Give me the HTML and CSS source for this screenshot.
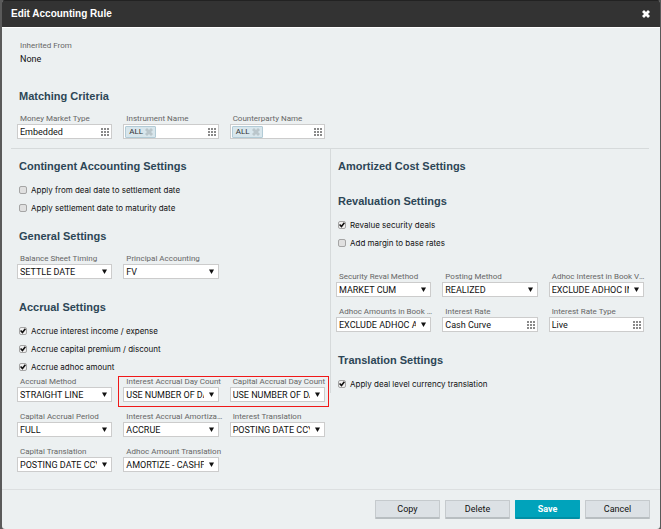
FILE: index.html
```html
<!DOCTYPE html>
<html lang="en">
<head>
<meta charset="utf-8">
<title>Edit Accounting Rule</title>
<link rel="stylesheet" href="styles.css">
</head>
<body>
<svg class="defs" aria-hidden="true">
  <symbol id="grid" viewBox="0 0 8 8"><path fill="#8a8a8a" d="M0 0h2v2H0zM3 0h2v2H3zM6 0h2v2H6zM0 3h2v2H0zM3 3h2v2H3zM6 3h2v2H6zM0 6h2v2H0zM3 6h2v2H3zM6 6h2v2H6z"/></symbol>
  <symbol id="arrow" viewBox="0 0 5 5"><path fill="#111" d="M0 .5h5L2.5 5z"/></symbol>
  <symbol id="cross" viewBox="0 0 8 8"><path fill="currentColor" d="M0 2 2 0l2 2 2-2 2 2-2 2 2 2-2 2-2-2-2 2-2-2 2-2z"/></symbol>
</svg>
<form class="dialog">
  <header class="titlebar">
    <h1>Edit Accounting Rule</h1>
    <button type="button" class="close" aria-label="Close"><svg><use href="#cross"/></svg></button>
  </header>
  <main>
    <section class="top">
      <dl class="inherited"><dt>Inherited From</dt><dd>None</dd></dl>
      <h2>Matching Criteria</h2>
      <div class="fields">
        <div class="field"><label for="mmt">Money Market Type</label><div class="control"><input id="mmt" type="text" value="Embedded"><svg class="grid"><use href="#grid"/></svg></div></div>
        <div class="field"><label for="inst">Instrument Name</label><div class="control tags"><span class="tag">ALL<button type="button" aria-label="Remove"><svg><use href="#cross"/></svg></button></span><input id="inst" type="text"><svg class="grid"><use href="#grid"/></svg></div></div>
        <div class="field"><label for="cpty">Counterparty Name</label><div class="control tags"><span class="tag">ALL<button type="button" aria-label="Remove"><svg><use href="#cross"/></svg></button></span><input id="cpty" type="text"><svg class="grid"><use href="#grid"/></svg></div></div>
      </div>
    </section>
    <div class="columns">
      <div class="column">
        <section>
          <h2>Contingent Accounting Settings</h2>
          <label class="check"><input type="checkbox">Apply from deal date to settlement date</label>
          <label class="check"><input type="checkbox">Apply settlement date to maturity date</label>
        </section>
        <section class="near">
          <h2>General Settings</h2>
          <div class="fields">
            <div class="field"><label for="bst">Balance Sheet Timing</label><div class="control"><select id="bst"><option>SETTLE DATE</option></select><svg class="arrow"><use href="#arrow"/></svg></div></div>
            <div class="field"><label for="pa">Principal Accounting</label><div class="control"><select id="pa"><option>FV</option></select><svg class="arrow"><use href="#arrow"/></svg></div></div>
          </div>
        </section>
        <section>
          <h2>Accrual Settings</h2>
          <label class="check"><input type="checkbox" checked>Accrue interest income / expense</label>
          <label class="check"><input type="checkbox" checked>Accrue capital premium / discount</label>
          <label class="check"><input type="checkbox" checked>Accrue adhoc amount</label>
          <div class="fields follow">
            <div class="field"><label for="am">Accrual Method</label><div class="control"><select id="am"><option>STRAIGHT LINE</option></select><svg class="arrow"><use href="#arrow"/></svg></div></div>
            <div class="highlight">
              <div class="field"><label for="iadc">Interest Accrual Day Count</label><div class="control"><select id="iadc"><option>USE NUMBER OF DAYS</option></select><svg class="arrow"><use href="#arrow"/></svg></div></div>
              <div class="field"><label for="cadc">Capital Accrual Day Count</label><div class="control"><select id="cadc"><option>USE NUMBER OF DAYS</option></select><svg class="arrow"><use href="#arrow"/></svg></div></div>
            </div>
            <div class="field"><label for="cap">Capital Accrual Period</label><div class="control"><select id="cap"><option>FULL</option></select><svg class="arrow"><use href="#arrow"/></svg></div></div>
            <div class="field"><label for="iaa">Interest Accrual Amortization</label><div class="control"><select id="iaa"><option>ACCRUE</option></select><svg class="arrow"><use href="#arrow"/></svg></div></div>
            <div class="field"><label for="it">Interest Translation</label><div class="control"><select id="it"><option>POSTING DATE CCY</option></select><svg class="arrow"><use href="#arrow"/></svg></div></div>
            <div class="field"><label for="ct">Capital Translation</label><div class="control"><select id="ct"><option>POSTING DATE CCY</option></select><svg class="arrow"><use href="#arrow"/></svg></div></div>
            <div class="field"><label for="aat">Adhoc Amount Translation</label><div class="control"><select id="aat"><option>AMORTIZE - CASHFLOW</option></select><svg class="arrow"><use href="#arrow"/></svg></div></div>
          </div>
        </section>
      </div>
      <div class="column right">
        <section><h2>Amortized Cost Settings</h2></section>
        <section>
          <h2>Revaluation Settings</h2>
          <label class="check"><input type="checkbox" checked>Revalue security deals</label>
          <label class="check"><input type="checkbox">Add margin to base rates</label>
          <div class="fields apart">
            <div class="field"><label for="srm">Security Reval Method</label><div class="control"><select id="srm"><option>MARKET CUM</option></select><svg class="arrow"><use href="#arrow"/></svg></div></div>
            <div class="field"><label for="pm">Posting Method</label><div class="control"><select id="pm"><option>REALIZED</option></select><svg class="arrow"><use href="#arrow"/></svg></div></div>
            <div class="field"><label for="aib">Adhoc Interest in Book Value</label><div class="control"><select id="aib"><option>EXCLUDE ADHOC INTEREST</option></select><svg class="arrow"><use href="#arrow"/></svg></div></div>
            <div class="field"><label for="aab">Adhoc Amounts in Book Value</label><div class="control"><select id="aab"><option>EXCLUDE ADHOC AMOUNTS</option></select><svg class="arrow"><use href="#arrow"/></svg></div></div>
            <div class="field"><label for="ir">Interest Rate</label><div class="control"><input id="ir" type="text" value="Cash Curve"><svg class="grid"><use href="#grid"/></svg></div></div>
            <div class="field"><label for="irt">Interest Rate Type</label><div class="control"><input id="irt" type="text" value="Live"><svg class="grid"><use href="#grid"/></svg></div></div>
          </div>
        </section>
        <section>
          <h2>Translation Settings</h2>
          <label class="check"><input type="checkbox" checked>Apply deal level currency translation</label>
        </section>
      </div>
    </div>
  </main>
  <footer>
    <button type="button">Copy</button>
    <button type="button">Delete</button>
    <button type="button" class="primary">Save</button>
    <button type="button">Cancel</button>
  </footer>
</form>
</body>
</html>
```
FILE: styles.css
```css
* { box-sizing: border-box; }
html { background: #5a5a5a; }
body { margin: 0; padding: 0 1px 0 2px; font: 9px/12px Roboto, "Liberation Sans", Arial, sans-serif; color: #111; }
.defs { position: absolute; width: 0; height: 0; }
h1, h2, dl, dd { margin: 0; }
button, input, select { font: inherit; color: inherit; }

.dialog { display: flex; flex-direction: column; min-height: 100vh; background: #ecf0f1; border-radius: 3px; overflow: hidden; }
.titlebar { display: flex; align-items: center; justify-content: space-between; height: 28px; padding: 0 10px 0 9px; background: #333; color: #fff; border-top: 1px solid #222; border-bottom: 1px solid #fff; }
h1, h2 { font-family: "Liberation Sans", Arial, sans-serif; }
h1 { font-size: 10px; line-height: 14px; }
.close { width: 8px; height: 8px; padding: 0; border: 0; background: none; color: #fff; }
.close svg, .tag svg { display: block; width: 100%; height: 100%; }

main { flex: 1; padding: 0 11px 0 9px; }
.top { padding: 13px 0 9px 6px; border-bottom: 1px solid #d6dadb; }
.inherited { padding-left: 3px; margin-bottom: 24px; }
dt, .field label { font-size: 8px; line-height: 10px; color: #666; }
dd { margin-top: 2px; }
.top .fields { width: calc(50% - 8px); }
h2 { padding-left: 2px; font-size: 11px; line-height: 14px; color: #2c4656; margin-bottom: 8px; }

.columns { display: grid; grid-template-columns: 1fr 1fr; align-items: start; }
.column { min-width: 0; padding: 10px 5px 0 6px; }
.right { padding: 10px 5px 0; border-left: 1px solid #d6dadb; }
section + section { margin-top: 21px; }
section + .near { margin-top: 12px; }

.fields { display: grid; grid-template-columns: repeat(3, minmax(0, 1fr)); gap: 10px 11px; }
h2 + .fields { margin-top: 11px; }
.follow { margin-top: 1px; }
.apart { margin-top: 20px; }
.field { min-width: 0; }
.field label { display: block; margin-right: -5px; padding-left: 3px; white-space: nowrap; overflow: hidden; text-overflow: ellipsis; }
.right .field label { margin-right: -2px; }
.control { display: flex; align-items: center; height: 15px; background: #fff; border: 1px solid #ccc; }
.control input { flex: 1; min-width: 0; width: 100%; height: 13px; padding: 0 2px; border: 0; background: none; }
.control select { flex: 1; min-width: 0; height: 13px; padding: 0 0 0 2px; border: 0; background: none; appearance: none; overflow: hidden; text-overflow: clip; }
.grid { flex: none; width: 8px; height: 8px; margin: 0 2px; }
.arrow { flex: none; width: 5px; height: 5px; margin: 0 4px 0 5px; }
.tag { display: flex; align-items: center; gap: 2px; height: 12px; margin-left: 1px; padding: 0 2px 0 3px; font-size: 8px; line-height: 10px; background: #d8e6ec; border: 1px solid #b2cbd6; border-radius: 1px; color: #333; }
.tag button { width: 8px; height: 8px; padding: 0; border: 0; background: none; color: #bac6cb; }

.highlight { position: relative; grid-column: span 2; display: grid; grid-template-columns: subgrid; }
.highlight::after { content: ""; position: absolute; inset: -1px -4px -5px -5px; border: 1px solid #f01818; pointer-events: none; }

.check { display: flex; align-items: center; gap: 4px; height: 18px; padding-left: 2px; font-family: Inter, "Liberation Sans", sans-serif; font-size: 8px; }
.check input { appearance: none; display: grid; flex: none; width: 8px; height: 8px; margin: 0; border: 1px solid #a5a5a5; border-radius: 2px; background: #e0e0e0; }
.check input:checked { background: #f0f0f0; }
.check input:checked::after { content: ""; background: #111; clip-path: polygon(0 50%, 18% 34%, 40% 55%, 80% 4%, 100% 20%, 42% 94%); }

footer { display: flex; justify-content: flex-end; gap: 5px; height: 40px; padding: 10px 10px 0; border-top: 1px solid #dcdfe0; }
footer button { width: 65px; height: 19px; padding: 0; border: 1px solid #c5cacd; border-bottom: 2px solid #b8bec1; border-radius: 1px; background: #dce1e5; }
footer .primary { background: #00a3bb; border-color: #00a3bb; border-bottom-color: #008fa5; color: #fff; font-weight: bold; }
```
